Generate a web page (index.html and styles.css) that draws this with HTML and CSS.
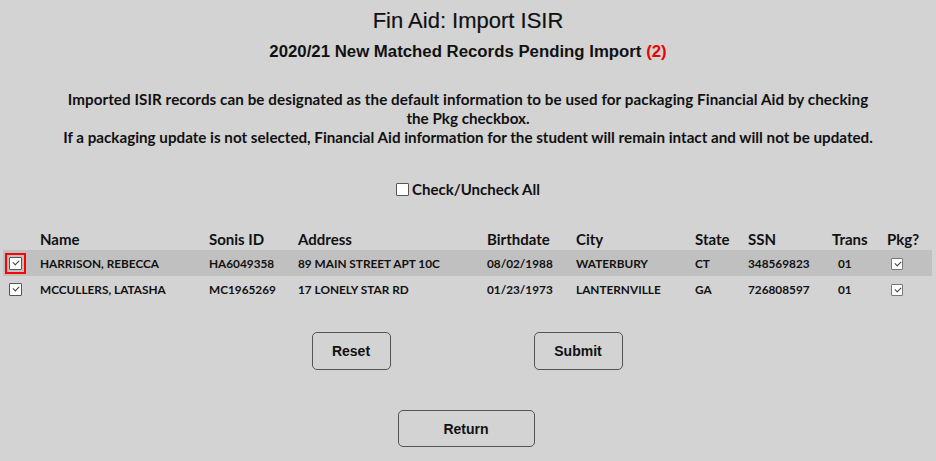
FILE: index.html
```html
<!DOCTYPE html>
<html>
<head>
<meta charset="utf-8">
<link rel="stylesheet" href="styles.css">
</head>
<body>
<div class="page">
  <h1 class="title">Fin Aid: Import ISIR</h1>
  <h2 class="subtitle">2020/21 New Matched Records Pending Import <span class="count">(2)</span></h2>
  <p class="intro">Imported ISIR records can be designated as the default information to be used for packaging Financial Aid by checking<br>the Pkg checkbox.<br>If a packaging update is not selected, Financial Aid information for the student will remain intact and will not be updated.</p>
  <label class="check-all"><span class="box"></span>Check/Uncheck All</label>
  <table class="records">
    <colgroup>
      <col class="c-sel"><col class="c-name"><col class="c-id"><col class="c-addr"><col class="c-bd"><col class="c-city"><col class="c-state"><col class="c-ssn"><col class="c-trans"><col class="c-pkg">
    </colgroup>
    <thead>
      <tr><th></th><th>Name</th><th>Sonis ID</th><th>Address</th><th>Birthdate</th><th>City</th><th>State</th><th>SSN</th><th>Trans</th><th>Pkg?</th></tr>
    </thead>
    <tbody>
      <tr class="active">
        <td class="sel"><span class="focus"><span class="box checked"></span></span></td>
        <td>HARRISON, REBECCA</td><td>HA6049358</td><td>89 MAIN STREET APT 10C</td><td>08/02/1988</td><td>WATERBURY</td><td>CT</td><td>348569823</td><td class="trans">01</td>
        <td class="pkg"><span class="box small checked"></span></td>
      </tr>
      <tr>
        <td class="sel"><span class="nofocus"><span class="box checked"></span></span></td>
        <td>MCCULLERS, LATASHA</td><td>MC1965269</td><td>17 LONELY STAR RD</td><td>01/23/1973</td><td>LANTERNVILLE</td><td>GA</td><td>726808597</td><td class="trans">01</td>
        <td class="pkg"><span class="box small checked"></span></td>
      </tr>
    </tbody>
  </table>
  <div class="actions">
    <button class="btn btn-reset">Reset</button>
    <button class="btn btn-submit">Submit</button>
  </div>
  <div class="actions return-row">
    <button class="btn btn-return">Return</button>
  </div>
</div>
</body>
</html>
```
FILE: styles.css
```css
html, body {
  margin: 0;
  padding: 0;
  background: #d3d3d3;
}
body {
  font-family: "Lato", "Liberation Sans", sans-serif;
  color: #111;
}
.page {
  padding: 0 3px;
  display: flex;
  flex-direction: column;
  align-items: center;
}
.title {
  font-family: "Liberation Sans", Arial, sans-serif;
  font-weight: normal;
  font-size: 22px;
  margin: 8px 0 0;
  line-height: 25px;
  -webkit-text-stroke: 0.2px #111;
}
.subtitle {
  font-family: "Liberation Sans", Arial, sans-serif;
  font-weight: bold;
  font-size: 16.8px;
  margin: 9px 0 0;
  line-height: 20px;
}
.count { color: #e00; }
.intro {
  font-weight: bold;
  font-size: 15.2px;
  line-height: 19px;
  text-align: center;
  width: 840px;
  margin: 28px 0 0;
}
.intro::first-line { letter-spacing: 0.07px; }
.check-all {
  display: flex;
  align-items: center;
  gap: 3px;
  font-weight: bold;
  font-size: 15px;
  margin-top: 33px;
  line-height: 18px;
}
.box {
  display: inline-block;
  box-sizing: border-box;
  width: 13px;
  height: 13px;
  border: 1px solid #555;
  background: #fff;
  border-radius: 1px;
  position: relative;
}
.box.checked::after {
  content: "";
  position: absolute;
  left: 3px;
  top: 2px;
  width: 5px;
  height: 3px;
  border-left: 1.2px solid #444;
  border-bottom: 1.2px solid #444;
  transform: rotate(-45deg);
}
.box.small {
  width: 12px;
  height: 12px;
  border-color: #777;
}
.box.small.checked::after { left: 2.5px; top: 2px; }
.records {
  align-self: stretch;
  border-collapse: collapse;
  margin-top: 30px;
  table-layout: fixed;
  width: 929px;
}
.c-sel { width: 33px; }
.c-name { width: 169px; }
.c-id { width: 89px; }
.c-addr { width: 189px; }
.c-bd { width: 89px; }
.c-city { width: 119px; }
.c-state { width: 53px; }
.c-ssn { width: 84px; }
.c-trans { width: 55px; }
.c-pkg { width: 49px; }
.records th {
  text-align: left;
  font-size: 15px;
  font-weight: bold;
  padding: 0 0 0 4px;
  height: 22px;
  vertical-align: middle;
}
.records td {
  font-size: 11.8px;
  font-weight: bold;
  padding: 0 0 0 4px;
  height: 26px;
  vertical-align: middle;
  white-space: nowrap;
}
.records tr.active td { background: #c0c0c0; }
.records td.sel { padding-left: 2px; }
.focus, .nofocus {
  display: flex;
  width: 21px;
  height: 21px;
  box-sizing: border-box;
  align-items: center;
  justify-content: center;
  border: 2px solid transparent;
}
.focus { border-color: #f00; }
.records td.trans { padding-left: 10px; }
.records td.pkg { padding-left: 8px; }
.records td.pkg .box { vertical-align: middle; }
.actions {
  display: flex;
  justify-content: center;
  gap: 143px;
  margin-top: 30px;
  margin-right: 2px;
}
.return-row { margin-top: 40px; margin-right: 4px; }
.btn {
  font-family: "Liberation Sans", Arial, sans-serif;
  font-weight: bold;
  font-size: 14px;
  color: #111;
  background: #d3d3d3;
  border: 1px solid #555;
  border-radius: 5px;
  height: 38px;
  padding: 0;
}
.btn-reset { width: 79px; }
.btn-submit { width: 89px; }
.btn-return { width: 137px; height: 37px; }
```
